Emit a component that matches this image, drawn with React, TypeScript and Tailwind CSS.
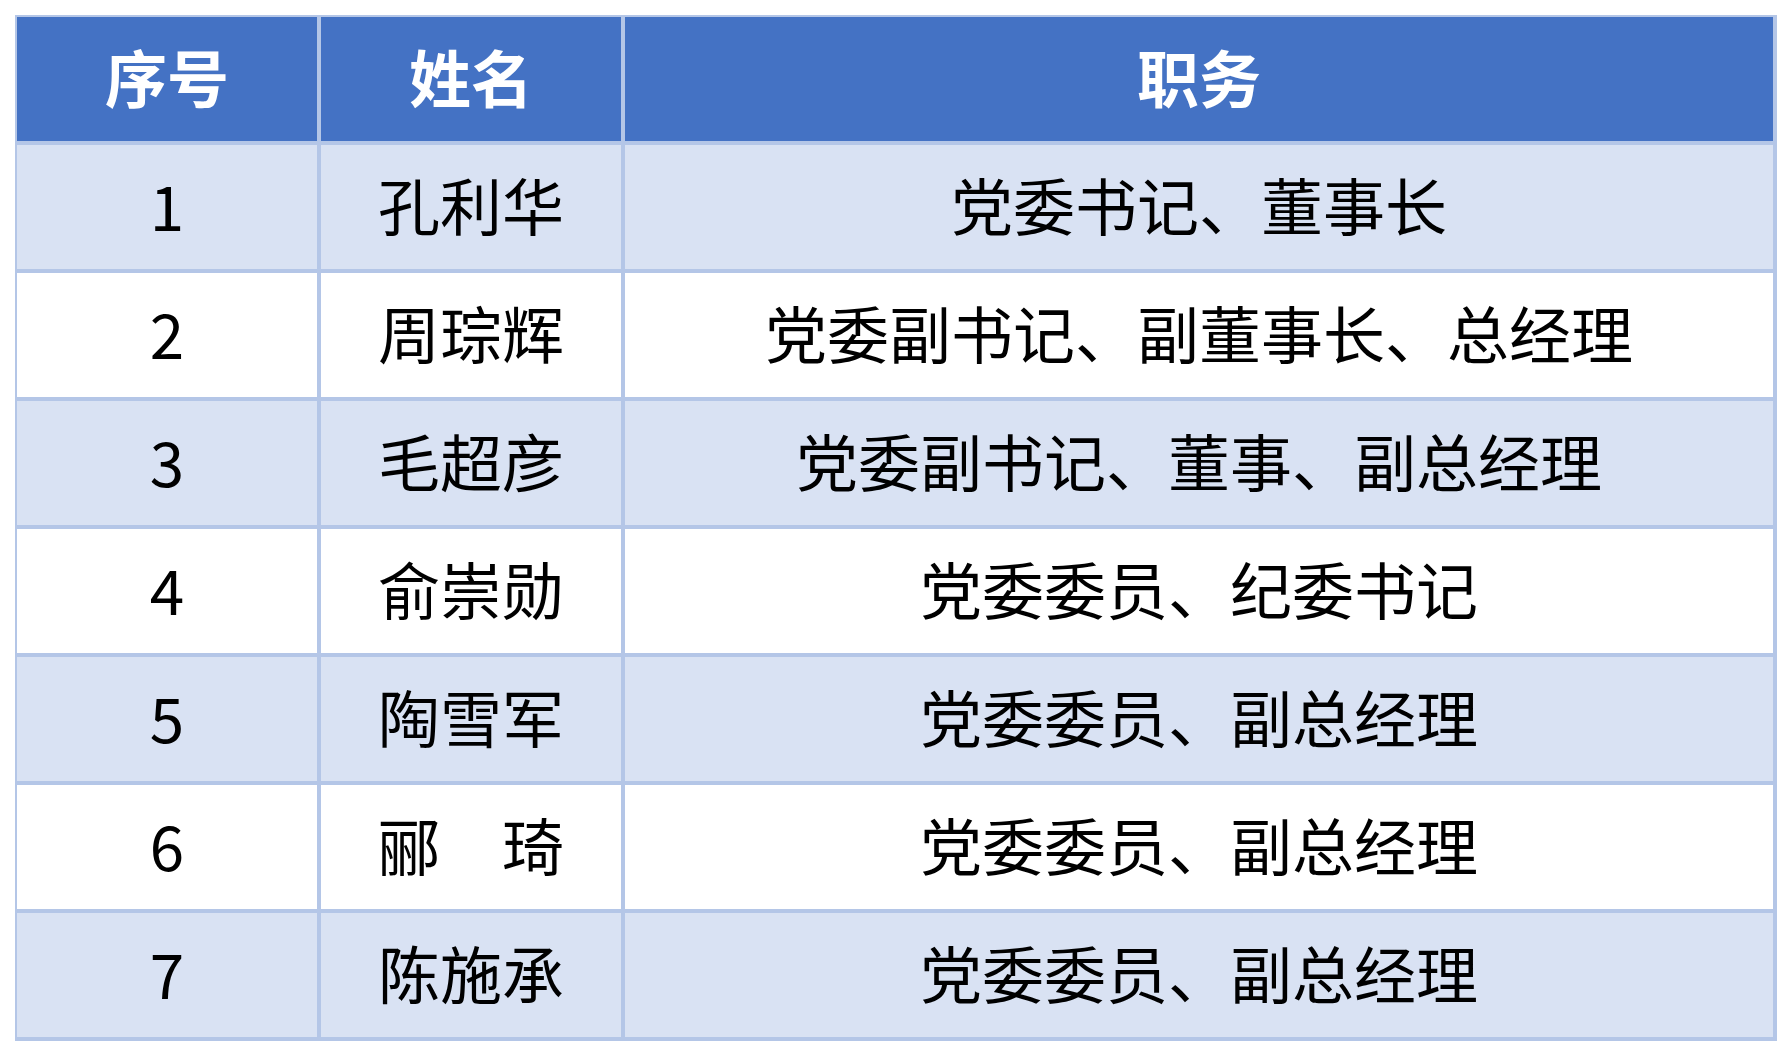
import React from "react";

const rows: [string, string, string][] = [
  ["1", "孔利华", "党委书记、董事长"],
  ["2", "周琮辉", "党委副书记、副董事长、总经理"],
  ["3", "毛超彦", "党委副书记、董事、副总经理"],
  ["4", "俞崇勋", "党委委员、纪委书记"],
  ["5", "陶雪军", "党委委员、副总经理"],
  ["6", "郦　琦", "党委委员、副总经理"],
  ["7", "陈施承", "党委委员、副总经理"],
];

export default function App() {
  return (
    <div
      className="w-[1792px] h-[1056px] bg-white pt-[15px] pl-[15px]"
      style={{ fontFamily: '"Noto Sans CJK SC", "Noto Sans", sans-serif' }}
    >
      <div className="inline-grid grid-cols-[300px_300px_1148px] auto-rows-[124px] gap-[4px] bg-[#b4c6e7] pt-[2px] pl-[2px] pr-[4px] pb-[4px]">
        {["序号", "姓名", "职务"].map((h) => (
          <div
            key={h}
            className="bg-[#4472c4] flex items-center justify-center pb-[7px] text-white font-bold text-[62px] leading-none"
          >
            {h}
          </div>
        ))}
        {rows.map((r, i) =>
          r.map((c, j) => (
            <div
              key={`${i}-${j}`}
              className={`${i % 2 === 0 ? "bg-[#d9e2f3]" : "bg-white"} flex items-center justify-center pb-[7px] text-black text-[62px] leading-none whitespace-pre`}
            >
              {c}
            </div>
          ))
        )}
      </div>
    </div>
  );
}
